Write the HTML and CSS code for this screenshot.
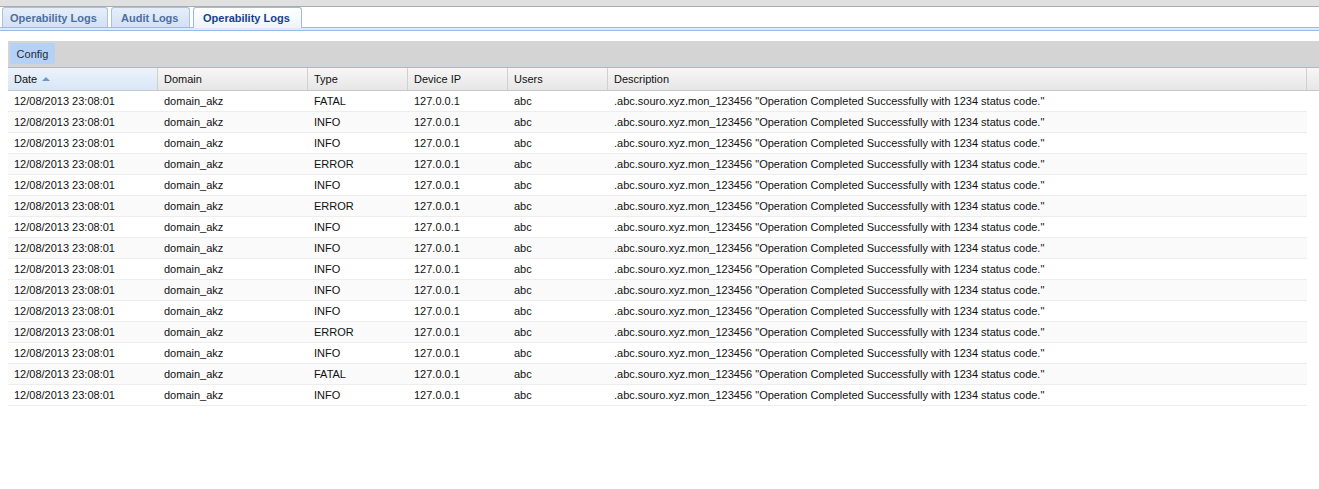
FILE: index.html
```html
<!DOCTYPE html>
<html>
<head>
<meta charset="utf-8">
<link rel="stylesheet" href="styles.css">
</head>
<body>
<div class="topbar"></div>
<div class="tabs">
  <div class="tab t1">Operability Logs</div>
  <div class="tab t2">Audit Logs</div>
  <div class="tab t3 active">Operability Logs</div>
</div>
<div class="strip"></div>
<div class="panel">
  <div class="toolbar"><button class="btn">Config</button></div>
  <div class="grid">
    <div class="hrow">
      <div class="hc c1 sorted">Date <span class="arrow"></span></div>
      <div class="hc c2">Domain</div>
      <div class="hc c3">Type</div>
      <div class="hc c4">Device IP</div>
      <div class="hc c5">Users</div>
      <div class="hc c6">Description</div>
      <div class="hc c7"></div>
    </div>
    <div class="body" id="body">
      <div class="row"><div class="c c1">12/08/2013 23:08:01</div><div class="c c2">domain_akz</div><div class="c c3">FATAL</div><div class="c c4">127.0.0.1</div><div class="c c5">abc</div><div class="c c6">.abc.souro.xyz.mon_123456 "Operation Completed Successfully with 1234 status code."</div></div>
      <div class="row"><div class="c c1">12/08/2013 23:08:01</div><div class="c c2">domain_akz</div><div class="c c3">INFO</div><div class="c c4">127.0.0.1</div><div class="c c5">abc</div><div class="c c6">.abc.souro.xyz.mon_123456 "Operation Completed Successfully with 1234 status code."</div></div>
      <div class="row"><div class="c c1">12/08/2013 23:08:01</div><div class="c c2">domain_akz</div><div class="c c3">INFO</div><div class="c c4">127.0.0.1</div><div class="c c5">abc</div><div class="c c6">.abc.souro.xyz.mon_123456 "Operation Completed Successfully with 1234 status code."</div></div>
      <div class="row"><div class="c c1">12/08/2013 23:08:01</div><div class="c c2">domain_akz</div><div class="c c3">ERROR</div><div class="c c4">127.0.0.1</div><div class="c c5">abc</div><div class="c c6">.abc.souro.xyz.mon_123456 "Operation Completed Successfully with 1234 status code."</div></div>
      <div class="row"><div class="c c1">12/08/2013 23:08:01</div><div class="c c2">domain_akz</div><div class="c c3">INFO</div><div class="c c4">127.0.0.1</div><div class="c c5">abc</div><div class="c c6">.abc.souro.xyz.mon_123456 "Operation Completed Successfully with 1234 status code."</div></div>
      <div class="row"><div class="c c1">12/08/2013 23:08:01</div><div class="c c2">domain_akz</div><div class="c c3">ERROR</div><div class="c c4">127.0.0.1</div><div class="c c5">abc</div><div class="c c6">.abc.souro.xyz.mon_123456 "Operation Completed Successfully with 1234 status code."</div></div>
      <div class="row"><div class="c c1">12/08/2013 23:08:01</div><div class="c c2">domain_akz</div><div class="c c3">INFO</div><div class="c c4">127.0.0.1</div><div class="c c5">abc</div><div class="c c6">.abc.souro.xyz.mon_123456 "Operation Completed Successfully with 1234 status code."</div></div>
      <div class="row"><div class="c c1">12/08/2013 23:08:01</div><div class="c c2">domain_akz</div><div class="c c3">INFO</div><div class="c c4">127.0.0.1</div><div class="c c5">abc</div><div class="c c6">.abc.souro.xyz.mon_123456 "Operation Completed Successfully with 1234 status code."</div></div>
      <div class="row"><div class="c c1">12/08/2013 23:08:01</div><div class="c c2">domain_akz</div><div class="c c3">INFO</div><div class="c c4">127.0.0.1</div><div class="c c5">abc</div><div class="c c6">.abc.souro.xyz.mon_123456 "Operation Completed Successfully with 1234 status code."</div></div>
      <div class="row"><div class="c c1">12/08/2013 23:08:01</div><div class="c c2">domain_akz</div><div class="c c3">INFO</div><div class="c c4">127.0.0.1</div><div class="c c5">abc</div><div class="c c6">.abc.souro.xyz.mon_123456 "Operation Completed Successfully with 1234 status code."</div></div>
      <div class="row"><div class="c c1">12/08/2013 23:08:01</div><div class="c c2">domain_akz</div><div class="c c3">INFO</div><div class="c c4">127.0.0.1</div><div class="c c5">abc</div><div class="c c6">.abc.souro.xyz.mon_123456 "Operation Completed Successfully with 1234 status code."</div></div>
      <div class="row"><div class="c c1">12/08/2013 23:08:01</div><div class="c c2">domain_akz</div><div class="c c3">ERROR</div><div class="c c4">127.0.0.1</div><div class="c c5">abc</div><div class="c c6">.abc.souro.xyz.mon_123456 "Operation Completed Successfully with 1234 status code."</div></div>
      <div class="row"><div class="c c1">12/08/2013 23:08:01</div><div class="c c2">domain_akz</div><div class="c c3">INFO</div><div class="c c4">127.0.0.1</div><div class="c c5">abc</div><div class="c c6">.abc.souro.xyz.mon_123456 "Operation Completed Successfully with 1234 status code."</div></div>
      <div class="row"><div class="c c1">12/08/2013 23:08:01</div><div class="c c2">domain_akz</div><div class="c c3">FATAL</div><div class="c c4">127.0.0.1</div><div class="c c5">abc</div><div class="c c6">.abc.souro.xyz.mon_123456 "Operation Completed Successfully with 1234 status code."</div></div>
      <div class="row"><div class="c c1">12/08/2013 23:08:01</div><div class="c c2">domain_akz</div><div class="c c3">INFO</div><div class="c c4">127.0.0.1</div><div class="c c5">abc</div><div class="c c6">.abc.souro.xyz.mon_123456 "Operation Completed Successfully with 1234 status code."</div></div>
    </div>
  </div>
</div>
</body>
</html>
```

FILE: styles.css
```css
html, body {
  margin: 0;
  padding: 0;
  background: #fff;
  font-family: "Liberation Sans", Arial, sans-serif;
  font-size: 11px;
  color: #000;
}

.topbar {
  height: 6px;
  background: #e0e0e0;
  border-bottom: 1px solid #acacac;
}

.tabs {
  display: flex;
  align-items: flex-end;
  gap: 3px;
  padding-left: 2px;
  height: 20px;
}

.tab {
  box-sizing: border-box;
  height: 20px;
  border: 1px solid #a9c2e2;
  border-bottom: none;
  border-radius: 3px 3px 0 0;
  background: linear-gradient(#e6eefa, #d3e1f3);
  color: #4d6fa0;
  font-weight: bold;
  font-size: 11px;
  padding: 4px 0 0 7px;
}

.t1 { width: 106px; }
.t2 { width: 79px; padding-left: 9px; }
.t3 { width: 109px; padding-left: 9px; }

.tab.active {
  background: linear-gradient(#ffffff, #eef4fc);
  color: #15428b;
  border-color: #99bbe8;
  position: relative;
  z-index: 1;
  height: 21px;
  margin-bottom: -1px;
}

.strip {
  height: 2px;
  border-top: 1px solid #99bbe8;
  border-bottom: 1px solid #99bbe8;
  background: #dfe9f7;
}

.panel {
  padding: 10px 0 0 8px;
}

.toolbar {
  height: 26px;
  box-sizing: border-box;
  background: #d4d4d4;
  padding: 2px 2px;
  display: flex;
  align-items: flex-start;
}

.btn {
  width: 45px;
  height: 21px;
  border: none;
  border-radius: 2px;
  background: #b5d2f6;
  font-family: "Liberation Sans", Arial, sans-serif;
  font-size: 11px;
  color: #1f2a3a;
  padding: 0;
}

.hrow {
  display: flex;
  height: 24px;
  box-sizing: border-box;
  border-top: 1px solid #99bbe8;
  border-bottom: 1px solid #c7c7c7;
  background: linear-gradient(#f7f7f7, #e6e6e6);
}

.hc {
  box-sizing: border-box;
  border-right: 1px solid #d0d0d0;
  padding: 5px 0 0 6px;
  color: #111;
  white-space: nowrap;
}

.hc.sorted {
  background: linear-gradient(#ebf3fd, #d9e6f6);
}

.arrow {
  display: inline-block;
  width: 0;
  height: 0;
  border-left: 4px solid transparent;
  border-right: 4px solid transparent;
  border-bottom: 4px solid #6f97c6;
  margin-left: 2px;
  vertical-align: 2px;
}

.c1 { width: 150px; }
.c2 { width: 150px; }
.c3 { width: 100px; }
.c4 { width: 100px; }
.c5 { width: 100px; }
.c6 { width: 699px; }
.hc.c7 { flex: 1; border-right: none; }

.body {
  width: 1299px;
}

.row {
  display: flex;
  height: 21px;
  box-sizing: border-box;
  border-bottom: 1px solid #ededed;
}

.row:nth-child(even) {
  background: #fafafa;
}

.c {
  box-sizing: border-box;
  padding: 4px 0 0 6px;
  white-space: nowrap;
  color: #111;
}
```
